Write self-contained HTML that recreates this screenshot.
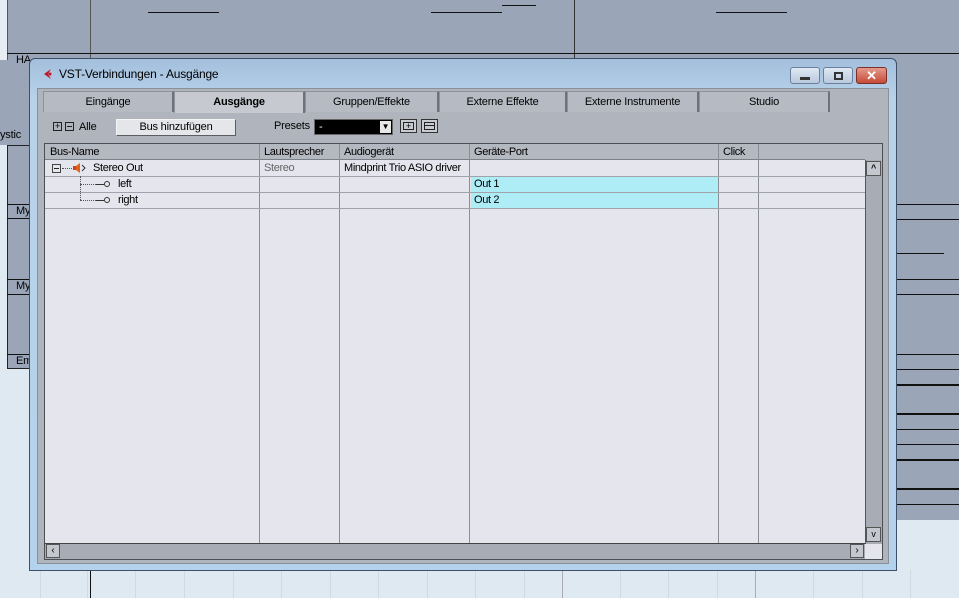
<!DOCTYPE html>
<html><head><meta charset="utf-8"><style>
*{margin:0;padding:0;box-sizing:border-box}
body{width:959px;height:598px;overflow:hidden;position:relative;background:#dfe9f1;font-family:"Liberation Sans",sans-serif;font-size:11px;color:#000;letter-spacing:-0.2px}
.a{position:absolute}
.hl{position:absolute;height:1px;background:#111}
.vl{position:absolute;width:1px;background:#888}
.gl{position:absolute;width:1px;top:570px;height:28px;background:#cfd9e2}
.tab{position:absolute;top:91px;height:21px;background:#b6bbc3;border:1px solid #8d929a;border-bottom:none;border-right:2px solid #6e737a;text-align:center;line-height:20px;font-size:11px}
.cell{position:absolute;height:16px;line-height:16px;font-size:11px;padding-left:4px;white-space:nowrap;letter-spacing:-0.35px}
</style></head><body>
<!-- background DAW -->
<div class="a" style="left:0;top:0;width:959px;height:70px;background:#9aa6b7"></div>
<div class="a" style="left:0;top:0;width:7px;height:60px;background:#e6eef4"></div>
<div class="vl" style="left:7px;top:0;height:60px;background:#555"></div>
<div class="vl" style="left:90px;top:0;height:58px;background:#555"></div>
<div class="vl" style="left:574px;top:0;height:58px;background:#333"></div>
<div class="hl" style="left:7px;top:53px;width:952px"></div>
<div class="hl" style="left:148px;top:12px;width:71px"></div>
<div class="hl" style="left:431px;top:12px;width:71px"></div>
<div class="hl" style="left:502px;top:5px;width:34px"></div>
<div class="hl" style="left:716px;top:12px;width:71px"></div>
<div class="a" style="left:16px;top:54px;font-size:11px">HA</div>
<div class="a" style="left:0;top:70px;width:30px;height:75px;background:#9aa6b7"></div>
<div class="a" style="left:0;top:129px;font-size:11px">ystic</div>
<div class="a" style="left:7px;top:145px;width:23px;height:224px;background:#9aa6b7;border:1px solid #222;border-right:none"></div>
<div class="hl" style="left:7px;top:204px;width:23px"></div><div class="a" style="left:16px;top:205px">My</div>
<div class="hl" style="left:7px;top:218px;width:23px"></div>
<div class="hl" style="left:7px;top:279px;width:23px"></div><div class="a" style="left:16px;top:280px">My</div>
<div class="hl" style="left:7px;top:294px;width:23px"></div>
<div class="hl" style="left:7px;top:354px;width:23px"></div><div class="a" style="left:16px;top:355px">Em</div>
<div class="a" style="left:896px;top:58px;width:63px;height:462px;background:#9aa6b7"></div>
<div class="hl" style="left:896px;top:204px;width:63px"></div>
<div class="hl" style="left:896px;top:219px;width:63px"></div>
<div class="hl" style="left:896px;top:253px;width:48px"></div>
<div class="hl" style="left:896px;top:279px;width:63px"></div>
<div class="hl" style="left:896px;top:294px;width:63px"></div>
<div class="hl" style="left:896px;top:354px;width:63px"></div>
<div class="hl" style="left:896px;top:369px;width:63px"></div>
<div class="hl" style="left:896px;top:384px;width:63px;height:2px"></div>
<div class="hl" style="left:896px;top:413px;width:63px;height:2px"></div>
<div class="hl" style="left:896px;top:429px;width:63px"></div>
<div class="hl" style="left:896px;top:444px;width:63px"></div>
<div class="hl" style="left:896px;top:459px;width:63px;height:2px"></div>
<div class="hl" style="left:896px;top:488px;width:63px;height:2px"></div>
<div class="hl" style="left:896px;top:504px;width:63px"></div>
<div class="gl" style="left:40px"></div><div class="gl" style="left:87px"></div><div class="gl" style="left:135px"></div><div class="gl" style="left:184px"></div><div class="gl" style="left:233px"></div><div class="gl" style="left:281px"></div><div class="gl" style="left:330px"></div><div class="gl" style="left:378px"></div><div class="gl" style="left:427px"></div><div class="gl" style="left:475px"></div><div class="gl" style="left:524px"></div><div class="gl" style="left:562px;background:#aab"></div><div class="gl" style="left:620px"></div><div class="gl" style="left:668px"></div><div class="gl" style="left:717px"></div><div class="gl" style="left:755px;background:#aab"></div><div class="gl" style="left:813px"></div><div class="gl" style="left:862px"></div><div class="gl" style="left:910px"></div>
<div class="vl" style="left:90px;top:570px;height:28px;background:#111"></div>
<!-- window -->
<div class="a" style="left:29px;top:58px;width:868px;height:513px;background:linear-gradient(#a3bfdc,#b8d2ea 40px,#b5d2ec);border:1px solid #3e5068;border-radius:6px 6px 0 0"></div>
<div class="a" style="left:42px;top:68px;width:12px;height:12px"><svg width="12" height="12"><path d="M9 1 L2 6 L9 11 L6 6 Z" fill="#c0182a"/><circle cx="8" cy="6" r="1.5" fill="#c0182a"/></svg></div>
<div class="a" style="left:59px;top:67px;font-size:12px;color:#000">VST-Verbindungen - Ausgänge</div>
<div class="a" style="left:790px;top:67px;width:30px;height:17px;border:1px solid #6d7f98;border-radius:3px;background:linear-gradient(#dfe8f3,#b9c9dd)"><div class="a" style="left:9px;top:9px;width:10px;height:3px;background:#333"></div></div>
<div class="a" style="left:823px;top:67px;width:30px;height:17px;border:1px solid #6d7f98;border-radius:3px;background:linear-gradient(#dfe8f3,#b9c9dd)"><div class="a" style="left:10px;top:4px;width:9px;height:8px;border:2px solid #333"></div></div>
<div class="a" style="left:856px;top:67px;width:31px;height:17px;border:1px solid #7a3028;border-radius:3px;background:linear-gradient(#e49a8c,#c64a36);color:#fff;text-align:center;font-weight:bold;font-size:13px;line-height:15px">✕</div>
<!-- content -->
<div class="a" style="left:37px;top:88px;width:852px;height:476px;background:#b0b5bd;border:1px solid #8a9098"></div>
<div class="tab" style="left:43px;width:131px">Eingänge</div>
<div class="tab" style="left:174px;width:131px;background:#c6cad0;font-weight:bold;height:22px">Ausgänge</div>
<div class="tab" style="left:305px;width:134px">Gruppen/Effekte</div>
<div class="tab" style="left:439px;width:128px">Externe Effekte</div>
<div class="tab" style="left:567px;width:132px">Externe Instrumente</div>
<div class="tab" style="left:699px;width:131px">Studio</div>
<!-- toolbar -->
<div class="a" style="left:53px;top:122px;width:9px;height:9px;border:1px solid #222;font-size:9px;line-height:7px;text-align:center">+</div>
<div class="a" style="left:65px;top:122px;width:9px;height:9px;border:1px solid #222"><div class="a" style="left:1px;top:3px;width:5px;height:1px;background:#222"></div></div>
<div class="a" style="left:79px;top:121px">Alle</div>
<div class="a" style="left:116px;top:119px;width:120px;height:17px;background:#e5e6ea;border:1px solid #f4f4f4;border-right-color:#5a5e64;border-bottom-color:#5a5e64;text-align:center;line-height:15px">Bus hinzufügen</div>
<div class="a" style="left:274px;top:120px">Presets</div>
<div class="a" style="left:314px;top:119px;width:79px;height:16px;background:#000;color:#fff;padding-left:4px;line-height:14px;border:1px solid #666">-</div>
<div class="a" style="left:380px;top:121px;width:11px;height:12px;background:#e8e8e8;font-size:8px;text-align:center;line-height:12px">▼</div>
<div class="a" style="left:400px;top:119px;width:17px;height:14px;border:1px solid #333;background:#c8ccd2"><div class="a" style="left:2px;top:2px;width:11px;height:8px;border:1px solid #222;font-size:9px;line-height:6px;text-align:center">+</div></div>
<div class="a" style="left:421px;top:119px;width:17px;height:14px;border:1px solid #333;background:#c8ccd2"><div class="a" style="left:2px;top:2px;width:11px;height:8px;border:1px solid #222"><div class="a" style="left:0;top:2px;width:9px;height:1px;background:#222"></div></div></div>
<!-- table -->
<div class="a" style="left:44px;top:143px;width:839px;height:417px;background:#e5e5ed;border:1px solid #4a4e55"></div>
<div class="a" style="left:45px;top:144px;width:820px;height:16px;background:#b4b8c0;border-bottom:1px solid #7b7f86"></div>
<div class="a" style="left:865px;top:144px;width:17px;height:16px;background:#b4b8c0"></div>
<div class="cell" style="left:46px;top:144px">Bus-Name</div>
<div class="cell" style="left:260px;top:144px">Lautsprecher</div>
<div class="cell" style="left:340px;top:144px">Audiogerät</div>
<div class="cell" style="left:470px;top:144px">Geräte-Port</div>
<div class="cell" style="left:719px;top:144px">Click</div>
<div class="a" style="left:471px;top:177px;width:247px;height:31px;background:#aeecf6"></div>
<div class="vl" style="left:259px;top:144px;height:399px;background:#8a8e96"></div>
<div class="vl" style="left:339px;top:144px;height:399px;background:#8a8e96"></div>
<div class="vl" style="left:469px;top:144px;height:399px;background:#8a8e96"></div>
<div class="vl" style="left:718px;top:144px;height:399px;background:#8a8e96"></div>
<div class="vl" style="left:758px;top:144px;height:399px;background:#8a8e96"></div>
<div class="hl" style="left:45px;top:176px;width:820px;background:#a0a4aa"></div>
<div class="hl" style="left:45px;top:192px;width:820px;background:#a0a4aa"></div>
<div class="hl" style="left:45px;top:208px;width:820px;background:#a0a4aa"></div>
<div class="a" style="left:52px;top:164px;width:9px;height:9px;border:1px solid #444"><div class="a" style="left:1px;top:3px;width:5px;height:1px;background:#222"></div></div>
<div class="a" style="left:62px;top:168px;width:10px;border-top:1px dotted #555"></div>
<svg class="a" style="left:72px;top:162px" width="16" height="12"><rect x="1" y="4" width="3" height="4" fill="#c84818"/><path d="M4 4 L8 1 L8 11 L4 8Z" fill="#e06020"/><path d="M10 3 L13 6 L10 9" stroke="#333" fill="none"/></svg>
<div class="cell" style="left:89px;top:160px">Stereo Out</div>
<div class="cell" style="left:260px;top:160px;color:#666">Stereo</div>
<div class="cell" style="left:340px;top:160px">Mindprint Trio ASIO driver</div>
<div class="a" style="left:80px;top:176px;height:24px;border-left:1px dotted #555"></div>
<div class="a" style="left:80px;top:184px;width:16px;border-top:1px dotted #555"></div>
<div class="a" style="left:80px;top:200px;width:16px;border-top:1px dotted #555"></div>
<div class="a" style="left:96px;top:184px;width:8px;height:1px;background:#333"></div>
<div class="a" style="left:96px;top:200px;width:8px;height:1px;background:#333"></div>
<div class="a" style="left:104px;top:181px;width:6px;height:6px;border:1px solid #333;border-radius:50%"></div>
<div class="a" style="left:104px;top:197px;width:6px;height:6px;border:1px solid #333;border-radius:50%"></div>
<div class="cell" style="left:114px;top:176px">left</div>
<div class="cell" style="left:114px;top:192px">right</div>
<div class="cell" style="left:470px;top:176px">Out 1</div>
<div class="cell" style="left:470px;top:192px">Out 2</div>
<!-- scrollbars -->
<div class="a" style="left:865px;top:160px;width:17px;height:384px;background:#a8adb5;border-left:1px solid #555"></div>
<div class="a" style="left:866px;top:161px;width:15px;height:15px;background:#c4c8ce;border:1px solid #555;font-size:9px;text-align:center;line-height:13px;font-weight:bold">^</div>
<div class="a" style="left:866px;top:527px;width:15px;height:15px;background:#c4c8ce;border:1px solid #555;font-size:9px;text-align:center;line-height:12px">v</div>
<div class="a" style="left:45px;top:543px;width:820px;height:16px;background:#a8adb5;border-top:1px solid #444"></div>
<div class="a" style="left:46px;top:544px;width:14px;height:14px;background:#c4c8ce;border:1px solid #555;font-size:10px;text-align:center;line-height:12px">‹</div>
<div class="a" style="left:850px;top:544px;width:14px;height:14px;background:#c4c8ce;border:1px solid #555;font-size:10px;text-align:center;line-height:12px">›</div>
</body></html>
